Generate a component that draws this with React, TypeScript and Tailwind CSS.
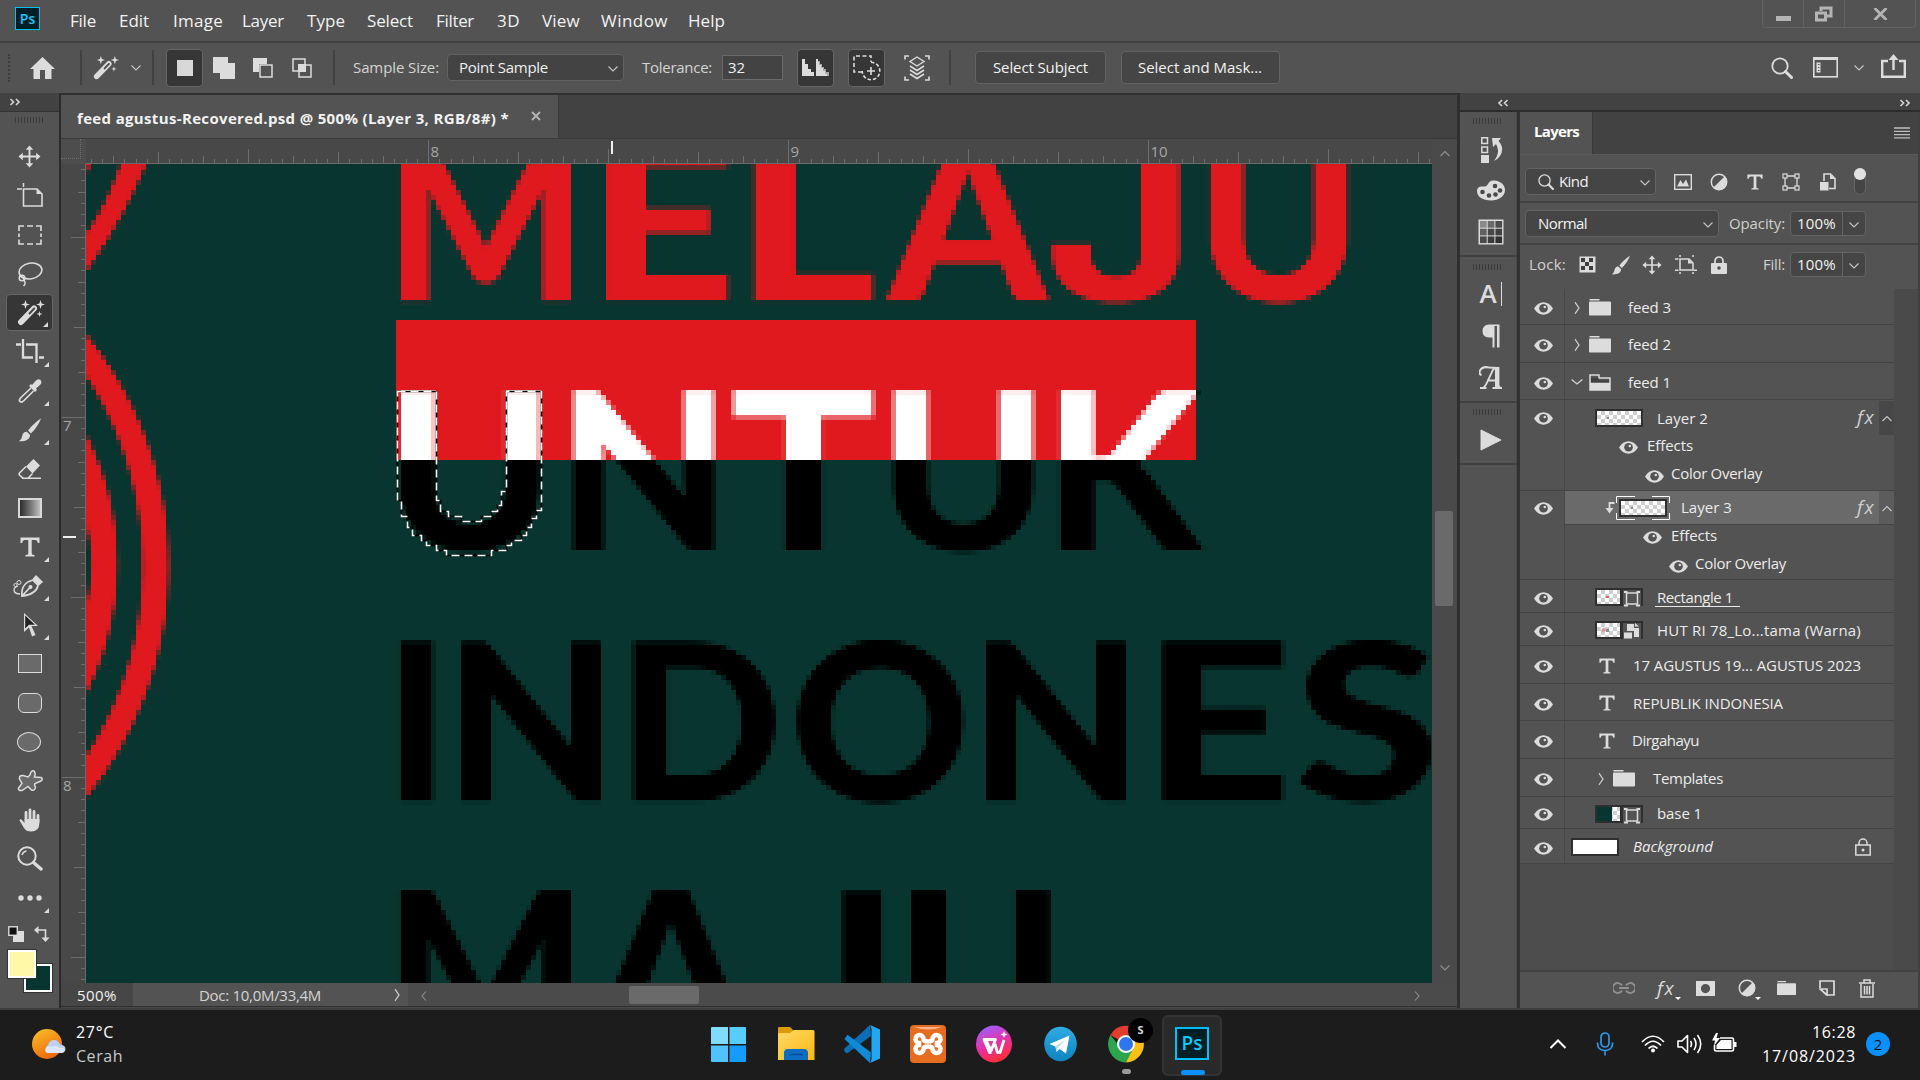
import React, { useLayoutEffect, useRef, useState, type ReactNode } from 'react';

/* Text set to an exact advance width by adjusting its tracking. */
function Fit({ w, className = '', children }: { w: number; className?: string; children: string }) {
  const ref = useRef<HTMLSpanElement>(null);
  const [ls, setLs] = useState(0);
  useLayoutEffect(() => {
    if (ref.current) setLs((w - ref.current.getBoundingClientRect().width) / children.length);
  }, [w, children]);
  return (
    <span className={`block shrink-0 whitespace-nowrap ${className}`} style={{ width: w, letterSpacing: ls }}>
      <span ref={ref}>{children}</span>
    </span>
  );
}

type P = { children?: ReactNode; w: number; h: number; className?: string };
const Svg = ({ children, w, h, className = '' }: P) => (
  <svg width={w} height={h} viewBox={`0 0 ${w} ${h}`} className={`block shrink-0 ${className}`} fill="none">
    {children}
  </svg>
);

const C = '#dcdcdc';

const Chevron = ({ dir = 'down', className = '' }: { dir?: 'down' | 'up' | 'left' | 'right'; className?: string }) => {
  const d = { down: 'M2.5 4.5L7 9L11.5 4.5', up: 'M2.5 9L7 4.5L11.5 9', left: 'M9 2.5L5 7L9 11.5', right: 'M5 2.5L9 7L5 11.5' }[dir];
  return (
    <Svg w={14} h={14} className={className}>
      <path d={d} stroke="currentColor" strokeWidth="1.1" />
    </Svg>
  );
};

const DoubleChevron = ({ left = false }: { left?: boolean }) => (
  <Svg w={12} h={8}>
    <path d={left ? 'M5 1L2 4L5 7M10.500 1L7.500 4L10.500 7' : 'M1.500 1L4.500 4L1.500 7M7 1L10 4L7 7'} stroke="#d0d0d0" strokeWidth="1.7" />
  </Svg>
);

const Grip = () => (
  <Svg w={29} h={6}>
    {Array.from({ length: 10 }, (_, i) => (
      <rect key={i} x={i * 3} y="0" width="1" height="6" fill="#3b3b3b" />
    ))}
  </Svg>
);

const MoveIcon = ({ s = 24 }: { s?: number }) => (
  <svg width={s} height={s} viewBox="0 0 24 24" fill={C} className="block shrink-0">
    <path d="M12 .5L16 5H13V11H19V8L23.500 12L19 16V13H13V19H16L12 23.500L8 19H11V13H5V16L.5 12L5 8V11H11V5H8Z" />
  </svg>
);

const Wand = () => (
  <Svg w={30} h={26}>
    <path d="M5 22L18 8.500" stroke={C} strokeWidth="6" strokeLinecap="round" />
    <path d="M13.500 13.500L18.200 8.500" stroke="#4a4a4a" strokeWidth="2" strokeLinecap="round" />
    <path d="M9.500 0L10.600 3.400L14 4.500L10.600 5.600L9.500 9L8.400 5.600L5 4.500L8.400 3.400Z" fill={C} />
    <path d="M24.500 0L25.600 3.400L29 4.500L25.600 5.600L24.500 9L23.400 5.600L20 4.500L23.400 3.400Z" fill={C} />
    <path d="M23.500 11L24.200 13.300L26.500 14L24.200 14.700L23.500 17L22.800 14.700L20.500 14L22.800 13.300Z" fill={C} />
  </Svg>
);

const Brush = ({ s = 24 }: { s?: number }) => (
  <svg width={s} height={s} viewBox="0 0 24 24" className="block shrink-0">
    <path d="M23 .5C19 3 13 8.500 10 12.500L13 15.500C16.500 12 21 6 23 .5Z" fill={C} />
    <path d="M8.800 13.800C5 13.500 4.500 17 3.800 19.500C3.200 21.500 2 22.500 .8 23.200C6 23.800 12.500 22 12 16.800Z" fill={C} />
  </svg>
);

const Magnifier = ({ s = 22 }: { s?: number }) => (
  <svg width={s} height={s} viewBox="0 0 22 22" fill="none" className="block shrink-0">
    <circle cx="9" cy="9" r="7.700" stroke={C} strokeWidth="1.800" />
    <path d="M14.500 14.500L20.500 20.500" stroke={C} strokeWidth="3" strokeLinecap="round" />
  </svg>
);

const TIcon = ({ s = 20 }: { s?: number }) => (
  <svg width={s} height={s} viewBox="0 0 20 20" fill={C} className="block shrink-0">
    <path d="M.5 .5H19.500V6H17.800C17.500 3.500 16.500 3 14 3H11.700V16C11.700 17.400 12 17.800 14.500 18V19.500H5.500V18C8 17.800 8.300 17.400 8.300 16V3H6C3.500 3 2.500 3.500 2.200 6H.5Z" />
  </svg>
);

const Folder = ({ open = false, w = 22 }: { open?: boolean; w?: number }) => (
  <svg width={w} height={(w * 17) / 22} viewBox="0 0 22 17" className="block shrink-0">
    {open ? (
      <>
        <path d="M1 16V1H10V4H21V16Z" fill="none" stroke={C} strokeWidth="1.500" />
        <path d="M1 8.500H21V16H1Z" fill={C} />
        <path d="M2 4H9.500V6.500H20V8.500H2Z" fill="#3f3f3f" />
      </>
    ) : (
      <path d="M.5 0H10.500V1.500H.5ZM1 2.500H21Q22 2.500 22 3.500V15.500Q22 16.500 21 16.500H1Q0 16.500 0 15.500V3.500Q0 2.500 1 2.500Z" fill={C} />
    )}
  </svg>
);

const Eye = () => (
  <Svg w={19} h={13}>
    <path d="M0 6.500C5 -1.800 14 -1.800 19 6.500C14 14.800 5 14.800 0 6.500Z" fill={C} />
    <circle cx="9.500" cy="6.300" r="4.300" fill="#535353" />
    <circle cx="10.800" cy="5" r="1.300" fill={C} />
  </Svg>
);

const HalfCircle = () => (
  <Svg w={18} h={18}>
    <circle cx="9" cy="9" r="7.700" stroke={C} strokeWidth="1.500" />
    <path d="M14.800 3.200A8.200 8.200 0 0 1 3.200 14.800Z" fill={C} />
  </Svg>
);

const ShapeIcon = () => (
  <Svg w={18} h={18}>
    <path d="M3 3H15V15H3Z" stroke={C} strokeWidth="1.300" />
    {[1, 13].map((x) => [1, 13].map((y) => <rect key={`${x}${y}`} x={x} y={y} width="4" height="4" fill="#535353" stroke={C} strokeWidth="1.200" />))}
  </Svg>
);

const SmartIcon = () => (
  <Svg w={18} h={18}>
    <path d="M5 8V1H11.500L16 5.500V15.500H10" stroke={C} strokeWidth="1.600" />
    <path d="M11 1V6H16ZM1 9H9.500V17.500H1Z" fill={C} />
  </Svg>
);

const LockSolid = () => (
  <Svg w={16} h={18}>
    <path d="M4 8V5A4 4 0 0 1 12 5V8" stroke={C} strokeWidth="1.700" />
    <rect x="0" y="7" width="16" height="11" rx="1" fill={C} />
    <circle cx="8" cy="12" r="1.800" fill="#535353" />
  </Svg>
);

const PsMark = ({ className = '' }: { className?: string }) => (
  <div className={`flex items-center justify-center border-2 border-[#00c0f8] bg-[#001e26] font-["Open_Sans"] font-semibold text-[#12c8fb] ${className}`}>Ps</div>
);

/* ---------------------------------------------------------------- top bars */

const MENU: [string, number, string][] = [
  ['File', 26, 'w-[49px]'],
  ['Edit', 30, 'w-[54px]'],
  ['Image', 50, 'w-[69px]'],
  ['Layer', 42, 'w-[65px]'],
  ['Type', 38, 'w-[60px]'],
  ['Select', 46, 'w-[69px]'],
  ['Filter', 38, 'w-[61px]'],
  ['3D', 23, 'w-[45px]'],
  ['View', 38, 'w-[59px]'],
  ['Window', 67, 'w-[87px]'],
  ['Help', 37, 'w-[60px]'],
];

function MenuBar() {
  return (
    <header className="flex h-[43px] shrink-0 border-b-2 border-[#404040] bg-[#535353]">
      <PsMark className="mt-[7px] ml-[15px] h-[23px] w-[25px] !border-[1.5px] text-[14px]" />
      <nav className="ml-[30px] flex items-center text-[17px] text-[#f2f2f2]">
        {MENU.map(([t, w, c]) => (
          <div key={t} className={c}>
            <Fit w={w}>{t}</Fit>
          </div>
        ))}
      </nav>
      <div className="mr-[4px] ml-auto flex h-[28px] rounded-b border border-t-0 border-[#616161]">
        <div className="flex w-[41px] justify-center border-r border-[#616161]">
          <div className="mt-[16px] h-[5px] w-[15px] bg-[#b4b4b4]" />
        </div>
        <div className="flex w-[41px] justify-center border-r border-[#616161] pt-[6px]">
          <Svg w={18} h={16}>
            <path d="M6 5V2H16V10H12" stroke="#b4b4b4" strokeWidth="3" />
            <path d="M1.500 7H10.500V14H1.500Z" stroke="#b4b4b4" strokeWidth="3" />
          </Svg>
        </div>
        <div className="flex w-[70px] justify-center pt-[8px]">
          <Svg w={15} h={12}>
            <path d="M1.500 0L13.500 12M13.500 0L1.500 12" stroke="#b4b4b4" strokeWidth="2.800" />
          </Svg>
        </div>
      </div>
    </header>
  );
}

const Sep = ({ className = '' }: { className?: string }) => <div className={`h-[35px] w-[2px] shrink-0 bg-[#414141] ${className}`} />;

function OptionsBar() {
  return (
    <div className="flex h-[50px] shrink-0 items-center bg-[#535353] pb-px text-[15px] text-[#d4d4d4]">
      <div className="ml-[8px] h-[28px] w-[2px] border-l-2 border-dotted border-[#3c3c3c]" />
      <Svg w={25} h={22} className="ml-[20px]">
        <path d="M12.500 0L25 12H21.500V22H15V13H10V22H3.500V12H0Z" fill={C} />
      </Svg>
      <Sep className="ml-[25px]" />
      <div className="ml-[9px] scale-[.93]"><Wand /></div>
      <Chevron className="ml-[8px] text-[#c8c8c8]" />
      <Sep className="ml-[9px]" />
      <div className="ml-[12px] flex h-[38px] w-[37px] items-center justify-center rounded border border-[#666] bg-[#363636]">
        <div className="h-[16px] w-[16px] bg-[#d8d8d8]" />
      </div>
      <Svg w={22} h={22} className="ml-[10px]">
        <path d="M0 0H15V6H22V22H7V16H0Z" fill={C} />
      </Svg>
      <Svg w={20} h={20} className="ml-[18px]">
        <path d="M0 0H14V6H6V14H0Z" fill={C} />
        <rect x="7" y="7" width="12" height="12" stroke={C} strokeWidth="1.500" />
      </Svg>
      <Svg w={20} h={20} className="ml-[19px]">
        <rect x="1" y="1" width="12" height="12" stroke={C} strokeWidth="1.500" />
        <rect x="7" y="7" width="12" height="12" stroke={C} strokeWidth="1.500" />
        <rect x="6" y="6" width="8" height="8" fill={C} />
      </Svg>
      <Sep className="ml-[21px]" />
      <Fit w={86} className="ml-[18px]">Sample Size:</Fit>
      <div className="ml-[8px] flex h-[27px] w-[177px] items-center rounded border border-[#636363] bg-[#434343] text-white">
        <Fit w={89} className="ml-[11px] text-[#f0f0f0]">Point Sample</Fit>
        <Chevron className="mt-[3px] ml-auto mr-[3px] text-[#c8c8c8]" />
      </div>
      <Fit w={70} className="ml-[18px]">Tolerance:</Fit>
      <div className="ml-[10px] flex h-[25px] w-[61px] items-center border border-[#6a6a6a] bg-[#434343]">
        <Fit w={17} className="ml-[5px] text-[#f0f0f0]">32</Fit>
      </div>
      <div className="ml-[14px] flex h-[38px] w-[37px] items-center justify-center rounded border border-[#666] bg-[#363636]">
        <Svg w={28} h={17}>
          <path d="M0 17V0H3V5H6V10H9V13H12V17Z" fill={C} />
          <path d="M14 17V0H16V17Z" fill={C} />
          <path d="M16 2H18V5H20V8H22V10H24V13H27V17H16Z" fill="#a9a9a9" />
          <path d="M15 3H17V6H19V9H21V12H23V15H25V17H15Z" fill={C} />
        </Svg>
      </div>
      <div className="ml-[14px] flex h-[38px] w-[37px] items-center justify-center rounded border border-[#666] bg-[#363636]">
        <Svg w={28} h={26}>
          <path d="M9 17H1V1H18V7" stroke={C} strokeWidth="1.600" strokeDasharray="4 2.500" />
          <path d="M18 7.200A8.800 8.800 0 1 1 9.200 16" stroke={C} strokeWidth="1.600" strokeDasharray="3.500 2" />
          <path d="M18 12V20M14 16H22" stroke={C} strokeWidth="1.600" />
        </Svg>
      </div>
      <Svg w={26} h={26} className="ml-[19px]">
        <path d="M1 4.500V1H5M21 1H25V4.500M25 21.500V25H21M5 25H1V21.500" stroke={C} strokeWidth="1.600" />
        <path d="M13 2L20 6.500L13 11L6 6.500Z" stroke={C} strokeWidth="1.400" />
        <path d="M6 11L13 15.500L20 11M6 15L13 19.500L20 15M6 19L13 23.500L20 19" stroke={C} strokeWidth="1.600" />
      </Svg>
      <Sep className="ml-[19px]" />
      <div className="ml-[24px] flex h-[33px] w-[131px] items-center rounded border border-[#636363] bg-[#454545]">
        <Fit w={95} className="ml-[17px] text-[#f2f2f2]">Select Subject</Fit>
      </div>
      <div className="ml-[15px] flex h-[33px] w-[159px] items-center rounded border border-[#636363] bg-[#454545]">
        <Fit w={124} className="ml-[16px] text-[#f2f2f2]">Select and Mask...</Fit>
      </div>
      <div className="ml-auto flex items-center">
        <Magnifier s={22} />
        <Svg w={25} h={21} className="ml-[20px]">
          <rect x=".8" y=".8" width="23.400" height="19" stroke={C} strokeWidth="1.600" />
          <rect x="0" y="0" width="25" height="3" fill={C} />
          <rect x="3.500" y="5.500" width="4" height="10" fill={C} />
          <path d="M5 7.500H6.500M5 10.500H6.500M5 13.500H6.500" stroke="#535353" strokeWidth="1.200" />
        </Svg>
        <Chevron className="ml-[14px] text-[#c8c8c8]" />
        <Svg w={25} h={24} className="mr-[14px] ml-[15px] mb-[3px]">
          <path d="M7 7H1.200V22.800H23.800V7H18" stroke={C} strokeWidth="2.400" />
          <path d="M12.500 16V4" stroke={C} strokeWidth="2.400" />
          <path d="M12.500 0L17.500 6H7.500Z" fill={C} />
        </Svg>
      </div>
    </div>
  );
}

/* ---------------------------------------------------------------- tools */

const TOOLS: { icon: ReactNode; fly?: boolean; active?: boolean }[] = [
  { icon: <div><MoveIcon s={23} /></div> },
  {
    icon: (
      <Svg w={26} h={24} className="mb-[2px]">
        <path d="M0 6H5M6.500 0V4" stroke={C} strokeWidth="1.500" />
        <path d="M6.500 6H20L25 11V23H6.500Z" stroke={C} strokeWidth="1.600" />
        <path d="M19.500 6V11H25Z" fill={C} />
      </Svg>
    ),
  },
  { icon: <Svg w={24} h={20}><path d="M1 6V1H6M9 1H15M18 1H23V6M23 8.500V12M23 14.500V19H18M15 19H9M6 19H1V14.500M1 12V8.500" stroke={C} strokeWidth="1.600" /></Svg> },
  {
    icon: (
      <Svg w={26} h={25} className="mt-[2px]">
        <ellipse cx="13.500" cy="9" rx="11.500" ry="7.800" stroke={C} strokeWidth="1.600" transform="rotate(-10 13.500 9)" />
        <circle cx="5" cy="16" r="2.800" stroke={C} strokeWidth="1.500" />
        <path d="M6 18C9 19 8.500 22 6.500 24M2.500 13.500L8 17.500" stroke={C} strokeWidth="1.500" />
      </Svg>
    ),
  },
  { icon: <div className="ml-[3px]"><Wand /></div>, fly: true, active: true },
  { icon: <Svg w={28} h={26}><path d="M0 5.500H5M7 0V18.500H17M10 5.500H20.500V24M23 18.500H28" stroke={C} strokeWidth="2.300" /></Svg>, fly: true },
  {
    icon: (
      <Svg w={24} h={25}>
        <path d="M14 7L17.500 3Q20 0 22.500 2Q24.500 4.500 22 7L18 10.500L19 12L17 14L11 8L13 6Z" fill={C} />
        <path d="M13 10L3 19.500Q.5 22 2 23.500Q3.500 25 6 22.500L15.500 13" stroke={C} strokeWidth="1.700" />
      </Svg>
    ),
    fly: true,
  },
  { icon: <Brush s={24} />, fly: true },
  {
    icon: (
      <Svg w={24} h={22}>
        <path d="M15.500 1L22 7.500L14.500 15.500L8 8.500Z" fill={C} />
        <path d="M8 8.500L1.500 15Q.8 16 1.500 17L5 20.200H10L14.500 15.500M4 20.200H23" stroke={C} strokeWidth="1.600" />
      </Svg>
    ),
  },
  { icon: <div className="h-[20px] w-[24px] border-2 border-[#d8d8d8] bg-gradient-to-r from-[#2c2c2c] to-[#c0c0c0]" /> },
  { icon: <TIcon s={20} />, fly: true },
  {
    icon: (
      <Svg w={30} h={24} className="mr-[4px]">
        <path d="M9 22C8 14 12 8 20 6L25 11C24 18 17 21 9 22ZM9 22L17 13.500" stroke={C} strokeWidth="1.800" />
        <circle cx="17.500" cy="13" r="2" fill={C} />
        <path d="M19.500 5L23 1L30 8L26 11.500Z" fill={C} />
        <path d="M7 20C0 20 -1 14 5 12" stroke={C} strokeWidth="1.300" />
        <circle cx="2.500" cy="11" r="1.600" stroke={C} />
        <circle cx="6" cy="8.500" r="2" stroke={C} />
      </Svg>
    ),
    fly: true,
  },
  { icon: <Svg w={16} h={25} className="mr-[-2px]"><path d="M1 1L15 14H8.500L12.500 23L9 24.500L6 15.500L1 20Z" fill={C} /><path d="M2.200 3.500L12 12.800H6L2.200 16.500Z" fill="#222" /></Svg>, fly: true },
  { icon: <div className="h-[19px] w-[24px] border-[1.5px] border-[#dcdcdc] bg-[#6a6a6a]" /> },
  { icon: <div className="h-[20px] w-[24px] rounded-[6px] border-[1.5px] border-[#dcdcdc] bg-[#6a6a6a]" /> },
  { icon: <div className="mr-[2px] h-[20px] w-[24px] rounded-[50%] border-[1.5px] border-[#dcdcdc] bg-[#6a6a6a]" /> },
  { icon: <Svg w={26} h={22}><path d="M13 5Q14 0 17 1Q19 3 17.500 7L24 7.500Q26.500 9 24 11L18 13.500Q17 15 18.500 17Q18 21 14.500 20L11 16.500L5 20.500Q1 21 1.500 18L5 13.500L2.500 9Q2 5 6 5.500L11 7Z" fill="#6a6a6a" stroke={C} strokeWidth="1.500" /></Svg> },
  {
    icon: (
      <Svg w={22} h={24}>
        <path d="M7 13V4.500M11 12V2M15 12V3.500M19 14V7.500" stroke={C} strokeWidth="2.800" strokeLinecap="round" />
        <path d="M5.600 11V15L2.500 11.500Q.8 10.500 .5 12.500L5 20Q7 23.500 12 23.500Q20.400 23.500 20.400 15V11Z" fill={C} />
      </Svg>
    ),
  },
  { icon: <Svg w={26} h={25}><circle cx="10" cy="10" r="8.700" stroke={C} strokeWidth="2" /><path d="M5 9Q6 5.500 9.500 5" stroke={C} strokeWidth="1.500" /><path d="M16.500 16.500L24 23" stroke={C} strokeWidth="3.400" strokeLinecap="round" /></Svg> },
  { icon: <Svg w={24} h={6}><circle cx="3" cy="3" r="2.700" fill={C} /><circle cx="12" cy="3" r="2.700" fill={C} /><circle cx="21" cy="3" r="2.700" fill={C} /></Svg>, fly: true },
];

function ToolColumn() {
  return (
    <aside className="flex w-[61px] shrink-0 flex-col border-r-2 border-[#2b2b2b] bg-[#535353]">
      <div className="flex h-[19px] items-center border-b border-[#333] bg-[#424242] pl-[9px]">
        <DoubleChevron />
      </div>
      <div className="mt-[5px] flex h-[20px] pl-[15px]">
        <Grip />
      </div>
      <div className="flex flex-col">
        {TOOLS.map((t, i) => (
          <div key={i} className="flex h-[39px] w-[59px] items-center justify-center">
            <div className={`relative flex h-[37px] w-[47px] items-center justify-center rounded ${t.active ? 'border border-[#666] bg-[#363636]' : ''}`}>
              {t.icon}
              {t.fly && (
                <Svg w={5} h={5} className="absolute right-[4px] bottom-[3px]">
                  <path d="M5 0V5H0Z" fill={C} />
                </Svg>
              )}
            </div>
          </div>
        ))}
      </div>
      <div className="mt-[8px] flex h-[18px] items-center">
        <Svg w={16} h={16} className="ml-[8px]">
          <rect x="5" y="5" width="11" height="11" fill={C} />
          <rect x=".8" y=".8" width="8.500" height="8.500" fill="#111" stroke={C} strokeWidth="1.400" />
        </Svg>
        <Svg w={16} h={16} className="ml-[10px]">
          <path d="M4 4H11.500V12" stroke={C} strokeWidth="1.600" />
          <path d="M0 4L4.500 0V8ZM11.500 16L7.500 11.500H15.500Z" fill={C} />
        </Svg>
      </div>
      <div className="relative mt-[6px] ml-[7px] h-[44px] w-[46px]">
        <div className="absolute right-0 bottom-0 h-[30px] w-[30px] border border-[#333] bg-white p-[2px]"><div className="h-full bg-[#07352f]" /></div>
        <div className="absolute top-0 left-0 h-[30px] w-[30px] border border-[#333] bg-white p-[2px]"><div className="h-full bg-[#fff8a8]" /></div>
      </div>
    </aside>
  );
}

/* ---------------------------------------------------------------- canvas */

/* Letter with the left and right extents of its ink. */
type Glyph = [string, number, number];
type Face = { family: string; weight: number; size: number };
const HEAVY: Face = { family: 'Lato', weight: 900, size: 219 };
const HOOKED: Face = { family: 'Inter', weight: 700, size: 217 };
const faceOf = (ch: string) => (ch === 'J' ? HOOKED : HEAVY);

function Word({ glyphs, base, fill }: { glyphs: Glyph[]; base: number; fill: string }) {
  const ctx = document.createElement('canvas').getContext('2d')!;
  return (
    <text y={base} fill={fill}>
      {glyphs.map(([ch, l, r], i) => {
        const f = faceOf(ch);
        ctx.font = `${f.weight} ${f.size}px ${f.family}`;
        const m = ctx.measureText(ch);
        const s = (r - l) / (m.actualBoundingBoxRight + m.actualBoundingBoxLeft);
        return (
          <tspan
            key={i}
            x={l + m.actualBoundingBoxLeft * s}
            textLength={m.width * s}
            lengthAdjust="spacingAndGlyphs"
            fontFamily={`${f.family}, sans-serif`}
            fontWeight={f.weight}
            fontSize={f.size}
          >
            {ch}
          </tspan>
        );
      })}
    </text>
  );
}

const MELAJU: Glyph[] = [['M', 400, 571], ['E', 605.5, 728], ['L', 753.5, 873], ['A', 886, 1050], ['J', 1052, 1180], ['U', 1209.5, 1348]];
const UNTUK: Glyph[] = [['U', 399.5, 539.5], ['N', 573, 714], ['T', 733, 874], ['U', 893, 1033.5], ['K', 1059.5, 1204]];
const INDONES: Glyph[] = [['I', 400, 433], ['N', 461, 601], ['D', 633, 776], ['O', 797, 964], ['N', 986, 1126], ['E', 1162, 1283], ['S', 1299, 1432]];
const MAJU: Glyph[] = [['M', 400, 571], ['A', 588, 754], ['J', 755, 882], ['U', 911, 1050]];

const U_SELECTION =
  'M397.500 391.500H436.500V500.500H440.500V511.500H448.500V516.500H461.500V521.500H481.500V516.500H491.500V511.500H497.500V505.500H501.500V491.500H506.500V391.500H541.500V510.500H536.500V518.500H531.500V527.500H526.500V535.500H521.500V540.500H511.500V545.500H506.500V550.500H491.500V555.500H446.500V550.500H436.500V545.500H426.500V540.500H421.500V535.500H412.500V527.500H407.500V516.500H401.500V500.500H397.500Z';

function Artwork() {
  return (
    <svg width="1346" height="819" viewBox="86 164 1346 819" className="block bg-[#08352f]">
      <defs>
        <filter id="px" filterUnits="userSpaceOnUse" x="76" y="155" width="1370" height="840" colorInterpolationFilters="sRGB">
          <feGaussianBlur in="SourceGraphic" stdDeviation="1.300" result="soft" />
          <feFlood x="88" y="162" width="1" height="1" floodColor="#000" result="dot" />
          <feOffset in="dot" dx="0" dy="0" x="86" y="160" width="5" height="5" result="cell" />
          <feTile in="cell" result="grid" />
          <feComposite in="soft" in2="grid" operator="in" />
          <feMorphology operator="dilate" radius="2" />
        </filter>
        <clipPath id="bar"><rect x="396" y="320" width="800" height="140" /></clipPath>
      </defs>
      <g filter="url(#px)">
        <path d="M70 160H92L86 175L70 185Z" fill="#e0191f" />
        <path d="M80 242Q106 208 122 160H148Q122 224 80 280Z" fill="#e0191f" />
        <path d="M80 327A366 366 0 0 1 80 805V765A348 348 0 0 0 80 367Z" fill="#e0191f" />
        <path d="M80 423A284 284 0 0 1 80 705V622A150 150 0 0 0 80 507Z" fill="#e0191f" />
        <Word glyphs={MELAJU} base={300.500} fill="#e0191f" />
        <Word glyphs={INDONES} base={800.500} fill="#000" />
        <Word glyphs={MAJU} base={1049.500} fill="#000" />
        <Word glyphs={UNTUK} base={549.500} fill="#000" />
      </g>
      <rect x="396" y="320" width="800" height="140" fill="#e0191f" />
      <g clipPath="url(#bar)" aria-hidden="true">
        <g filter="url(#px)"><Word glyphs={UNTUK} base={549.500} fill="#fff" /></g>
      </g>
      <path d={U_SELECTION} stroke="#000" strokeWidth="1.600" fill="none" />
      <path d={U_SELECTION} stroke="#fff" strokeWidth="1.600" strokeDasharray="8 5" fill="none" />
    </svg>
  );
}

const tick = (k: number) => (k % 32 === 0 ? 23 : k % 16 === 0 ? 14 : k % 8 === 0 ? 11 : k % 4 === 0 ? 7 : 4);
const range = (a: number, b: number) => Array.from({ length: b - a + 1 }, (_, i) => a + i);

function HRuler() {
  return (
    <svg width="1346" height="25" viewBox="86 139 1346 25" className="block bg-[#484848]">
      {range(-30, 89).map((k) => (
        <rect key={k} x={Math.round(428 + k * 11.250)} y={163 - tick(k)} width="1" height={tick(k)} fill="#6e6e6e" />
      ))}
      <rect x="86" y="163" width="1346" height="1" fill="#6a6a6a" />
      {[8, 9, 10].map((n) => (
        <text key={n} x={430.500 + (n - 8) * 360} y="157" fontSize="15" fontFamily="Open Sans, sans-serif" fill="#a6a6a6">{n}</text>
      ))}
      <rect x="611" y="141" width="2" height="13" fill="#f0f0f0" />
    </svg>
  );
}

function VRuler() {
  return (
    <svg width="25" height="819" viewBox="61 164 25 819" className="block shrink-0 bg-[#484848]">
      {range(-22, 50).map((k) => (
        <rect key={k} x={85 - tick(k)} y={Math.round(416.500 + k * 11.250)} width={tick(k)} height="1" fill="#6e6e6e" />
      ))}
      <rect x="85" y="164" width="1" height="819" fill="#6a6a6a" />
      {[7, 8].map((n) => (
        <text key={n} x="63" y={431 + (n - 7) * 360} fontSize="15" fontFamily="Open Sans, sans-serif" fill="#a6a6a6">{n}</text>
      ))}
      <rect x="63" y="536" width="13" height="2" fill="#f0f0f0" />
    </svg>
  );
}

function DocumentArea() {
  return (
    <main className="flex w-[1396px] shrink-0 flex-col bg-[#484848]">
      <div className="flex h-[46px] border-t-2 border-b border-t-[#303030] border-b-[#3a3a3a] bg-[#424242]">
        <div className="flex w-[498px] items-center border-r border-[#383838] bg-[#535353] text-[15px] font-bold text-[#f2f2f2]">
          <Fit w={432} className="mt-[4px] ml-[16px]">feed agustus-Recovered.psd @ 500% (Layer 3, RGB/8#) *</Fit>
          <Svg w={10} h={10} className="mb-[2px] ml-[22px]">
            <path d="M1 1L9 9M9 1L1 9" stroke="#b5b5b5" strokeWidth="1.800" />
          </Svg>
        </div>
      </div>
      <div className="flex">
        <div className="flex flex-col">
          <div className="flex">
            <div className="h-[25px] w-[25px] bg-[#4d4d4d] p-0">
              <div className="h-[20px] w-[20px] border-r border-b border-dotted border-[#6e6e6e]" />
            </div>
            <HRuler />
          </div>
          <div className="flex">
            <VRuler />
            <Artwork />
          </div>
        </div>
        <div className="flex w-[25px] flex-col items-center bg-[#4a4a4a] pt-[8px] pb-[8px] text-[#8f8f8f]">
          <Chevron dir="up" />
          <div className="mt-[350px] mr-[2px] h-[95px] w-[18px] rounded-[2px] bg-[#6a6a6a]" />
          <Chevron dir="down" className="mt-auto" />
        </div>
      </div>
      <div className="flex h-[24px] items-center border-b border-[#303030] bg-[#4b4b4b] text-[15px]">
        <div className="flex h-full w-[72px] items-center bg-[#464646] pt-px">
          <Fit w={40} className="ml-[16px] text-[#f2f2f2]">500%</Fit>
        </div>
        <div className="flex h-full w-[275px] items-center bg-[#535353] pt-px">
          <Fit w={122} className="ml-[66px] text-[#d4d4d4]">Doc: 10,0M/33,4M</Fit>
          <Chevron dir="right" className="mr-[4px] ml-auto scale-y-[1.3] text-[#d4d4d4]" />
        </div>
        <Chevron dir="left" className="mt-[2px] ml-[9px] text-[#8f8f8f]" />
        <div className="ml-[198px] h-[18px] w-[70px] rounded-[2px] bg-[#6a6a6a]" />
        <Chevron dir="right" className="mt-[2px] mr-[33px] ml-auto text-[#8f8f8f]" />
      </div>
    </main>
  );
}

/* ---------------------------------------------------------------- dock */

function IconDock() {
  return (
    <div className="flex w-[60px] shrink-0 flex-col border-r-[3px] border-[#313131] bg-[#535353] shadow-[inset_-1px_0_#4a4a4a]">
      <div className="flex h-[145px] flex-col items-center border-b-2 border-[#414141] pt-[6px] pl-[3px]">
        <div className="mr-[6px]"><Grip /></div>
        <Svg w={24} h={28} className="mt-[12px] ml-[4px]">
          <path d="M1.800 1.800H7.500V7.500H1.800ZM1.800 11H7.500V16.500H1.800Z" stroke={C} strokeWidth="1.500" />
          <rect x="1" y="19" width="8" height="8" fill={C} />
          <path d="M12 2H21L18.500 5Q25 12 20 20Q18 23 14 25Q21 16 16 8L13 11Z" fill={C} />
        </Svg>
        <Svg w={28} h={21} className="mt-[16px] ml-[1px]">
          <path d="M0 11C0 7 3 6 7 6.500C12 7 10 0 17 .5C24 1 28 5 28 10C28 16 22 20.500 14 20.500C6 20.500 0 17 0 11Z" fill={C} />
          {[[5.500, 12], [12, 15.500], [18.500, 14.500], [23, 10.500], [18, 6]].map(([x, y]) => (
            <circle key={x} cx={x} cy={y} r="2.300" fill="#484848" />
          ))}
        </Svg>
        <Svg w={26} h={26} className="mt-[18px] ml-[1px]">
          <rect x=".5" y=".5" width="25" height="25" fill={C} />
          {['#8a8a8a', '#6a6a6a', '#4d4d4d', '#606060', '#484848', '#3f3f3f', '#484848', '#3c3c3c', '#303030'].map((c, i) => (
            <rect key={i} x={2 + (i % 3) * 7.700} y={2 + Math.floor(i / 3) * 7.700} width="6.700" height="6.700" fill={c} />
          ))}
        </Svg>
      </div>
      <div className="flex h-[146px] flex-col items-center border-b-2 border-[#414141] pt-[7px] pl-[4px]">
        <div className="mr-[6px]"><Grip /></div>
        <div className="mt-[12px] flex h-[24px] w-[22px] items-center border-r border-[#dcdcdc]">
          <Fit w={19} className="mt-[-2px] text-[26px] leading-[24px] font-semibold text-[#dcdcdc]">A</Fit>
        </div>
        <Svg w={18} h={24} className="mt-[18px]">
          <path d="M11 .5H7Q.5 1 .5 7Q.5 13 7 13.500H10.500V23.500H12.500V2H15V23.500H17.500V.5Z" fill={C} />
        </Svg>
        <Svg w={24} h={24} className="mt-[18px]">
          <path d="M1 22H7.500M4 22C7 21 9 14 12 8Q14 3.500 15.500 2H19.500V19Q19.500 22 22.500 22M13.500 22H23M8 14.500H17" stroke={C} strokeWidth="1.800" />
          <path d="M17.500 2V22" stroke={C} strokeWidth="3" />
          <path d="M2.500 9Q-.5 8 1 4.500Q3.500 0 10 1.500L19 2" stroke={C} strokeWidth="2" />
        </Svg>
      </div>
      <div className="flex h-[62px] flex-col items-center border-b-2 border-[#414141] pt-[6px] pl-[3px]">
        <div className="mr-[6px]"><Grip /></div>
        <Svg w={22} h={22} className="mt-[14px] ml-[2px]">
          <path d="M1 1L21 11L1 21Z" fill={C} stroke={C} strokeLinejoin="round" />
        </Svg>
      </div>
    </div>
  );
}

const checker = 'bg-[repeating-conic-gradient(#cfcfcf_0_25%,#ffffff_0_50%)] bg-[length:8px_8px]';

const Thumb = ({ speck }: { speck?: boolean }) => (
  <div className="h-[18px] w-[48px] shrink-0 border-2 border-[#2f2f2f]">
    <div className={`h-full w-full pt-[6px] pl-[10px] ${checker}`}>{speck && <div className="h-[2px] w-[2px] bg-[#888]" />}</div>
  </div>
);

const DualThumb = ({ kind, art }: { kind: 'shape' | 'smart'; art: ReactNode }) => (
  <div className="flex h-[18px] w-[48px] shrink-0 border-2 border-[#2f2f2f] bg-[#2f2f2f]">
    <div className={`flex h-[14px] w-[25px] items-center ${checker}`}>{art}</div>
    <div className="ml-[3px] h-[17px] w-[18px] bg-[#535353]">
      {kind === 'shape' ? (
        <Svg w={18} h={18}>
          <path d="M3.500 3H14.500V14H3.500Z" stroke={C} strokeWidth="1.500" />
          <path d="M1 1H4.500V3H1ZM13.500 1H17V3H13.500ZM1 14.500H5V16.500H1ZM13 14.500H17V16.500H13Z" fill={C} />
        </Svg>
      ) : (
        <Svg w={18} h={18}>
          <path d="M4 1H11V5H16V14H11V8H4Z" fill={C} />
          <path d="M12 0L16 3.500H12ZM1 9.500H9V15.500H1Z" fill={C} />
        </Svg>
      )}
    </div>
  </div>
);

function Row({ h, children }: { h: string; children: ReactNode }) {
  return (
    <div className={`flex shrink-0 border-b border-[#444] bg-[#535353] ${h}`}>
      <div className="flex h-full w-[45px] shrink-0 items-center justify-center border-r border-[#464646] pt-[4px] pl-[3px]">
        <Eye />
      </div>
      <div className="flex min-w-0 grow items-center pt-[2px]">{children}</div>
    </div>
  );
}

const FxMark = ({ selected = false }: { selected?: boolean }) => (
  <div className="ml-auto flex h-full items-center">
    <Fit w={18} className='mr-[4px] pb-[1px] font-["Open_Sans"] text-[19px] italic text-[#cfcfcf]'>fx</Fit>
    <div className={`flex h-full w-[15px] items-center justify-center ${selected ? 'bg-[#5c5c5c]' : 'bg-[#474747]'}`}>
      <Chevron dir="up" className="mt-[2px] text-[#c8c8c8]" />
    </div>
  </div>
);

function EffectLines({ shift, h1, h2 }: { shift: string; h1: string; h2: string }) {
  return (
    <div className={shift}>
      <div className={`flex items-center ${h1}`}>
        <div className="mt-[5px]"><Eye /></div>
        <Fit w={46} className="ml-[9px]">Effects</Fit>
      </div>
      <div className={`flex items-center pl-[26px] ${h2}`}>
        <div className="mt-[7px]"><Eye /></div>
        <Fit w={91} className="ml-[7px]">Color Overlay</Fit>
      </div>
    </div>
  );
}

function LayerList() {
  return (
    <div className="flex h-[681px] bg-[#4d4d4d] text-[15px] text-[#ececec]">
      <div className="flex w-[374px] flex-col">
        <Row h="h-[36px]"><Chevron dir="right" className="ml-[5px] scale-y-[1.3] text-[#d0d0d0]" /><div className="ml-[5px]"><Folder /></div><Fit w={43} className="ml-[17px]">feed 3</Fit></Row>
        <Row h="h-[38px]"><Chevron dir="right" className="ml-[5px] scale-y-[1.3] text-[#d0d0d0]" /><div className="ml-[5px]"><Folder /></div><Fit w={43} className="ml-[17px]">feed 2</Fit></Row>
        <Row h="h-[37px]"><Chevron dir="down" className="ml-[5px] scale-x-[1.2] text-[#d0d0d0]" /><div className="ml-[5px]"><Folder open /></div><Fit w={43} className="ml-[17px]">feed 1</Fit></Row>

        <div className="flex h-[91px] shrink-0 border-b border-[#444] bg-[#535353]">
          <div className="flex w-[45px] justify-center border-r border-[#464646] pt-[12px] pl-[3px]"><Eye /></div>
          <div className="grow pt-[1px]">
            <div className="flex h-[34px] items-center pl-[30px]"><Thumb speck /><Fit w={51} className="ml-[14px]">Layer 2</Fit><FxMark /></div>
            <EffectLines shift="mt-[-2px] pl-[54px]" h1="h-[24px]" h2="h-[32px]" />
          </div>
        </div>

        <div className="flex h-[89px] shrink-0 border-b border-[#444] bg-[#535353]">
          <div className="flex w-[45px] justify-center border-r border-[#464646] pt-[11px] pl-[3px]"><Eye /></div>
          <div className="grow">
            <div className="flex h-[34px] items-center border-b border-[#444] bg-[#6a6a6a]">
              <Svg w={10} h={12} className="ml-[40px]">
                <path d="M9.500 1H4.500V6" stroke={C} strokeWidth="1.800" />
                <path d="M.5 6H8.500L4.500 11.500Z" fill={C} />
              </Svg>
              <div className="relative ml-[4px]">
                <Thumb speck />
                <Svg w={54} h={24} className="absolute top-[-3px] left-[-3px]">
                  <path d="M.5 7V.5H19M36 .5H53.500V7M53.500 17V23.500H36M19 23.500H.5V17" stroke="#fff" />
                </Svg>
              </div>
              <Fit w={51} className="ml-[14px]">Layer 3</Fit>
              <FxMark selected />
            </div>
            <EffectLines shift="pl-[78px]" h1="h-[20px]" h2="h-[36px]" />
          </div>
        </div>

        <Row h="h-[33px]"><div className="ml-[30px]"><DualThumb kind="shape" art={<div className="ml-[9px] h-[2px] w-[3px] bg-[#e06060]" />} /></div><div className="ml-[12px] border-b border-[#e8e8e8] pr-[7px] pl-[2px] leading-[18px]"><Fit w={76}>Rectangle 1</Fit></div></Row>
        <Row h="h-[33px]"><div className="ml-[30px]"><DualThumb kind="smart" art={<><div className="ml-[5px] h-[4px] w-[3px] rotate-45 bg-[#e09090]" /><div className="ml-[1px] h-[3px] w-[3px] bg-[#888]" /></>} /></div><Fit w={204} className="ml-[14px]">HUT RI 78_Lo...tama (Warna)</Fit></Row>
        <Row h="h-[38px]"><div className="ml-[34px]"><TIcon s={16} /></div><Fit w={228} className="ml-[18px]">17 AGUSTUS 19... AGUSTUS 2023</Fit></Row>
        <Row h="h-[37px]"><div className="ml-[34px]"><TIcon s={16} /></div><Fit w={150} className="ml-[18px]">REPUBLIK INDONESIA</Fit></Row>
        <Row h="h-[38px]"><div className="ml-[34px]"><TIcon s={16} /></div><Fit w={67} className="ml-[17px]">Dirgahayu</Fit></Row>
        <Row h="h-[38px]"><Chevron dir="right" className="ml-[29px] scale-y-[1.3] text-[#d0d0d0]" /><div className="ml-[5px]"><Folder /></div><Fit w={70} className="ml-[18px]">Templates</Fit></Row>
        <Row h="h-[32px]"><div className="ml-[30px]"><DualThumb kind="shape" art={<div className="h-[14px] w-[15px] bg-[#07352f]" />} /></div><Fit w={45} className="ml-[14px]">base 1</Fit></Row>
        <Row h="h-[35px]">
          <div className="ml-[6px] h-[18px] w-[48px] border-2 border-[#2f2f2f] bg-white" />
          <Fit w={80} className="ml-[14px] pb-px italic">Background</Fit>
          <Svg w={16} h={18} className="mr-[23px] ml-auto">
            <path d="M4 7V5A4 4 0 0 1 12 5V7" stroke={C} strokeWidth="1.500" />
            <rect x=".8" y="7" width="14.400" height="10" stroke={C} strokeWidth="1.500" />
            <circle cx="8" cy="12" r="1.500" fill={C} />
          </Svg>
        </Row>
      </div>
      <div className="grow bg-[#4a4a4a]" />
    </div>
  );
}

const Percent = () => (
  <div className="flex h-[25px] w-[76px] items-center rounded border border-[#656565] bg-[#454545]">
    <Fit w={39} className="ml-[6px] text-[#f2f2f2]">100%</Fit>
    <div className="ml-auto flex h-full w-[23px] items-center justify-center border-l border-[#656565] pt-[3px]"><Chevron className="text-[#c8c8c8]" /></div>
  </div>
);

function LayersPanel() {
  return (
    <section className="flex w-[398px] shrink-0 flex-col bg-[#535353] text-[15px] text-[#d0d0d0]">
      <div className="flex h-[43px] border-b border-[#5a5a5a] bg-[#424242]">
        <div className="flex w-[73px] items-center border-r border-[#383838] bg-[#535353] pb-[4px] pl-[14px] text-[15px] font-bold text-white">
          <Fit w={45}>Layers</Fit>
        </div>
        <Svg w={16} h={12} className="mt-[15px] mr-[8px] ml-auto">
          <path d="M0 1H16M0 4.300H16M0 7.600H16M0 10.900H16" stroke="#bdbdbd" strokeWidth="1.300" />
        </Svg>
      </div>
      <div className="flex h-[48px] items-center border-b-2 border-[#424242] pt-[7px]">
        <div className="ml-[5px] flex h-[27px] w-[131px] items-center rounded border border-[#636363] bg-[#454545] text-[#f2f2f2]">
          <div className="ml-[12px]"><Magnifier s={16} /></div>
          <Fit w={29} className="ml-[5px]">Kind</Fit>
          <Chevron className="mt-[3px] mr-[3px] ml-auto text-[#c8c8c8]" />
        </div>
        <Svg w={18} h={16} className="ml-[18px]">
          <rect x=".7" y=".7" width="16.600" height="14.600" stroke={C} strokeWidth="1.400" />
          <path d="M3 12.500L6.500 6L9 10L12 5.500L15 12.500Z" fill={C} />
        </Svg>
        <div className="ml-[18px]"><HalfCircle /></div>
        <div className="ml-[19px]"><TIcon s={16} /></div>
        <div className="ml-[19px]"><ShapeIcon /></div>
        <div className="ml-[19px]"><SmartIcon /></div>
        <div className="ml-[17px] h-[27px] w-[12px] rounded-full border border-[#666] bg-[#454545]"><div className="mt-[-1px] ml-[-1px] h-[12px] w-[12px] rounded-full bg-[#e2e2e2]" /></div>
      </div>
      <div className="flex h-[42px] items-center border-b-2 border-[#424242]">
        <div className="ml-[5px] flex h-[27px] w-[194px] items-center rounded border border-[#636363] bg-[#454545] text-[#f2f2f2]">
          <Fit w={49} className="ml-[12px]">Normal</Fit>
          <Chevron className="mt-[3px] mr-[3px] ml-auto text-[#c8c8c8]" />
        </div>
        <Fit w={56} className="ml-[10px]">Opacity:</Fit>
        <div className="ml-[5px]"><Percent /></div>
      </div>
      <div className="flex h-[44px] items-center pb-[5px]">
        <Fit w={37} className="ml-[9px]">Lock:</Fit>
        <Svg w={17} h={17} className="ml-[13px]">
          <rect x=".5" y=".5" width="16" height="16" fill={C} />
          {[[2, 2], [10, 2], [6, 6], [2, 10], [10, 10]].map(([x, y]) => (
            <rect key={`${x}-${y}`} x={x} y={y} width="4" height="4" fill="#3d3d3d" />
          ))}
        </Svg>
        <div className="ml-[15px]"><Brush s={20} /></div>
        <div className="ml-[11px]"><MoveIcon s={20} /></div>
        <Svg w={22} h={20} className="ml-[13px]">
          <path d="M5 4H14L18 8V15H5Z" stroke={C} strokeWidth="1.500" />
          <path d="M13 4V8.500H18ZM0 3.200H3.500V4.700H0ZM0 14.500H3.500V16H0ZM18.500 14.500H22V16H18.500ZM4.300 0H5.800V2H4.300ZM17.300 0H18.800V2H17.300ZM4.300 17H5.800V19H4.300ZM17.300 17H18.800V19H17.300Z" fill={C} />
        </Svg>
        <div className="ml-[14px]"><LockSolid /></div>
        <Fit w={22} className="ml-[36px]">Fill:</Fit>
        <div className="ml-[5px]"><Percent /></div>
      </div>
      <LayerList />
      <div className="flex grow items-center border-t-2 border-[#424242] pb-[4px]">
        <Svg w={22} h={12} className="ml-[93px]">
          <path d="M9 3.500A5 5 0 1 0 9 8.500M13 3.500A5 5 0 1 1 13 8.500M6 6H16" stroke="#8f8f8f" strokeWidth="1.900" />
        </Svg>
        <Fit w={18} className='ml-[22px] font-["Open_Sans"] text-[19px] italic text-[#dcdcdc]'>fx</Fit>
        <Svg w={6} h={4} className="mt-[22px]"><path d="M0 0H6L3 3Z" fill="#fff" /></Svg>
        <Svg w={19} h={15} className="ml-[15px]">
          <path d="M0 0H19V15H0ZM9.500 3A4.600 4.600 0 1 0 9.500 12.200A4.600 4.600 0 1 0 9.500 3Z" fill={C} fillRule="evenodd" />
        </Svg>
        <div className="ml-[23px]"><HalfCircle /></div>
        <Svg w={6} h={4} className="mt-[22px] ml-[-1px]"><path d="M0 0H6L3 3Z" fill="#fff" /></Svg>
        <div className="ml-[16px]"><Folder w={19} /></div>
        <Svg w={16} h={16} className="ml-[23px]">
          <path d="M1 8V1H15V15H8M1 9H8V15ZM1 9L7.500 15" stroke={C} strokeWidth="1.700" />
        </Svg>
        <Svg w={18} h={19} className="ml-[23px]">
          <path d="M1 4H17M6 3.500V1H12V3.500M3 5V18H15V5M6.500 7V15.500M9 7V15.500M11.500 7V15.500" stroke={C} strokeWidth="1.500" />
        </Svg>
      </div>
    </section>
  );
}

/* ---------------------------------------------------------------- taskbar */

function Taskbar() {
  return (
    <footer className="flex h-[70px] shrink-0 items-center bg-[#1c1c1c] pb-[2px] text-[16px] text-white">
      <Svg w={34} h={31} className="ml-[32px]">
        <defs><linearGradient id="sun" x1="0" y1="0" x2=".5" y2="1"><stop stopColor="#f8c22d" /><stop offset="1" stopColor="#ef6a0a" /></linearGradient></defs>
        <circle cx="15" cy="15" r="15" fill="url(#sun)" />
        <path d="M16 24A4.500 4.500 0 0 1 16 16Q17.500 11 22 11Q26.500 11 28 15.500Q33.500 16 33.500 20Q33 24 29 24Z" fill="#bdd0f7" />
        <path d="M15 24Q12 22 14 19Q17 16 20 18Q24 15 27 19Q32 18 33 21Q32 24 29 24Z" fill="#dce8ff" />
      </Svg>
      <div className="ml-[10px] w-[100px] leading-[24px]">
        <Fit w={38}>27°C</Fit>
        <Fit w={47} className="text-[#c8c8c8]">Cerah</Fit>
      </div>
      <div className="ml-[535px] flex h-full items-center">
        <Svg w={36} h={38}>
          <path d="M0 3Q0 2 1 2H17V19H0Z" fill="#7fdcff" />
          <path d="M18.500 2H34Q35 2 35 3V19H18.500Z" fill="#56cdfc" />
          <path d="M0 20.500H17V37H1Q0 37 0 36Z" fill="#4fc3fb" />
          <path d="M18.500 20.500H35V36Q35 37 34 37H18.500Z" fill="#149cfb" />
        </Svg>
        <Svg w={37} h={34} className="ml-[31px]">
          <defs><linearGradient id="fold" x1="0" y1="0" x2="1" y2="1"><stop stopColor="#ffd968" /><stop offset="1" stopColor="#fdb910" /></linearGradient></defs>
          <path d="M0 1Q0 0 1 0H12L16 4V8H0Z" fill="#dd9a07" />
          <path d="M0 6H12L16 3H35Q36.500 3 36.500 4.500V33H0Z" fill="url(#fold)" />
          <path d="M6 33V26Q6 22 10 22H26Q30 22 30 26V33Z" fill="#0c6cc4" />
          <path d="M11 27.500H25" stroke="#0a4d92" strokeWidth="1.500" />
        </Svg>
        <Svg w={37} h={38} className="ml-[29px]">
          <path d="M26 0L.5 23.500Q-.5 25.500 1 27L3 28.500L27 11Z" fill="#0a6fb6" />
          <path d="M.5 14L3.500 9.800L27 27.500L26 38Z" fill="#0f8ad6" />
          <path d="M26 0L36 4.500V33.500L26 38Q27.500 36 27.500 34V4Q27.500 2 26 0Z" fill="#24a7f2" />
        </Svg>
        <Svg w={36} h={38} className="ml-[29px]">
          <rect x="0" y="0" width="36" height="38" rx="4" fill="#e66c1f" />
          <path d="M4 2Q18 7 32 2Z" fill="#f6b48c" />
          <path d="M13.500 14.500A4 4 0 1 0 9 18.500V20.500A4 4 0 1 0 13.500 25Q13.500 22 18 22Q22.500 22 22.500 25A4 4 0 1 0 27 20.500V18.500A4 4 0 1 0 22.500 14.500Q22.500 17 18 17Q13.500 17 13.500 14.500Z" transform="translate(0 -.5)" stroke="#fff" strokeWidth="4.600" />
        </Svg>
        <Svg w={36} h={38} className="ml-[30px]">
          <defs><linearGradient id="wps" x1=".2" y1="0" x2=".6" y2="1"><stop stopColor="#9a62ff" /><stop offset=".55" stopColor="#e92ea0" /><stop offset="1" stopColor="#ff3030" /></linearGradient></defs>
          <ellipse cx="18" cy="19" rx="18" ry="18.500" fill="url(#wps)" />
          <path d="M10 14.500L15 26L19.500 14.500H8L13.500 27.500H15.500M19 19L21.500 27.500H24L28 15" stroke="#fff" strokeWidth="2.800" strokeLinejoin="round" />
          <path d="M28 6L29 8.500L31.500 9.500L29 10.500L28 13L27 10.500L24.500 9.500L27 8.500Z" fill="#fff" />
        </Svg>
        <Svg w={33} h={36} className="ml-[32px]">
          <defs><linearGradient id="tg" x1="0" y1="0" x2="0" y2="1"><stop stopColor="#2fabe4" /><stop offset="1" stopColor="#0e84c0" /></linearGradient></defs>
          <ellipse cx="16.500" cy="18" rx="16.300" ry="17.300" fill="url(#tg)" />
          <path d="M5.500 18L25.500 9.500L22 27.500L15.500 23L12.500 26L11.500 20.500Z" fill="#fff" />
          <path d="M11.500 20.500L22 13L14 21.500L12.500 26Z" fill="#b9d9ec" />
        </Svg>
        <div className="relative ml-[31px]">
          <svg width="36" height="38" viewBox="0 0 36 38" className="block">
            <path d="M18 19L2.400 10A18 18.500 0 0 1 33.600 10H18Z" fill="#e33b2e" />
            <path d="M18 19L33.600 10A18 18.500 0 0 1 18 37.500L22 22Z" fill="#fbc116" />
            <path d="M18 37.500A18 18.500 0 0 1 2.400 10L12 22L25 24Z" fill="#2da44e" />
            <circle cx="18" cy="19" r="9" fill="#fff" />
            <circle cx="18" cy="19" r="7" fill="#2f76ee" />
          </svg>
          <div className="absolute top-[-7px] left-[20px] flex h-[25px] w-[25px] items-center justify-center rounded-full bg-black text-[11px] font-bold text-[#ddd]">S</div>
          <div className="absolute top-[44px] left-[14px] h-[5px] w-[9px] rounded-full bg-[#9a9a9a]" />
        </div>
        <div className="relative mt-[2px] ml-[18px] flex h-[61px] w-[60px] items-center justify-center rounded-[6px] border-2 border-[#333] bg-[#292929] pb-[3px]">
          <PsMark className="h-[33px] w-[34px] text-[19px]" />
          <div className="absolute bottom-[-1px] left-[17px] h-[5px] w-[24px] rounded-full bg-[#0a90ff]" />
        </div>
      </div>
      <div className="ml-auto flex items-center">
        <Svg w={18} h={12}><path d="M1.500 10L9 2.500L16.500 10" stroke="#fff" strokeWidth="2" /></Svg>
        <Svg w={18} h={24} className="ml-[29px]">
          <rect x="5" y="1" width="8" height="14" rx="4" stroke="#2f95ea" strokeWidth="1.700" />
          <path d="M1.500 10.500V12Q2 18.500 9 18.500Q16 18.500 16.500 12V10.500M9 18.500V23.500" stroke="#2f95ea" strokeWidth="1.700" />
        </Svg>
        <Svg w={24} h={18} className="ml-[27px]">
          <path d="M1 7Q12 -4.500 23 7M4 10.500Q12 2 20 10.500M7.500 13.500Q12 9 16.500 13.500" stroke="#fff" strokeWidth="1.700" />
          <circle cx="12" cy="15.500" r="2" fill="#fff" />
        </Svg>
        <Svg w={25} h={20} className="ml-[12px]">
          <path d="M1 7H5L10.500 1.500V18.500L5 13H1Z" stroke="#fff" strokeWidth="1.600" strokeLinejoin="round" />
          <path d="M13.500 7Q15.500 10 13.500 13M17 4Q21 10 17 16M20.500 1Q27 10 20.500 19" stroke="#fff" strokeWidth="1.600" />
        </Svg>
        <Svg w={25} h={20} className="mb-[2px] ml-[10px]">
          <path d="M8 5H20Q21.500 5 21.500 6.500V16.500Q21.500 18 20 18H4Q2.500 18 2.500 16.500V12" stroke="#fff" strokeWidth="1.600" />
          <path d="M9 7H19.500V16H4.500V12ZM22 9H24.500V14H22ZM4 0L0 7.500H3L2 13L8 5H4.500L6 0Z" fill="#fff" />
        </Svg>
        <div className="ml-[25px] flex w-[94px] flex-col items-end leading-[24px]">
          <Fit w={44}>16:28</Fit>
          <Fit w={94}>17/08/2023</Fit>
        </div>
        <div className="mr-[30px] ml-[10px] flex h-[24px] w-[24px] items-center justify-center rounded-full bg-[#0a90ff] text-[15px] text-[#081018]">2</div>
      </div>
    </footer>
  );
}

export default function App() {
  return (
    <div className='flex h-[1080px] w-[1920px] flex-col overflow-hidden bg-[#404040] font-["Open_Sans",sans-serif]'>
      <MenuBar />
      <OptionsBar />
      <div className="flex h-[915px] shrink-0">
        <ToolColumn />
        <DocumentArea />
        <div className="flex grow flex-col border-l-[3px] border-[#2f2f2f]">
          <div className="flex h-[19px] shrink-0 items-center justify-between border-b-2 border-[#2c2c2c] bg-[#424242] pt-[2px] pr-[9px] pl-[37px]">
            <DoubleChevron left />
            <DoubleChevron />
          </div>
          <div className="flex grow">
            <IconDock />
            <LayersPanel />
          </div>
        </div>
      </div>
      <div className="h-[2px] shrink-0 bg-[#404040]" />
      <Taskbar />
    </div>
  );
}
